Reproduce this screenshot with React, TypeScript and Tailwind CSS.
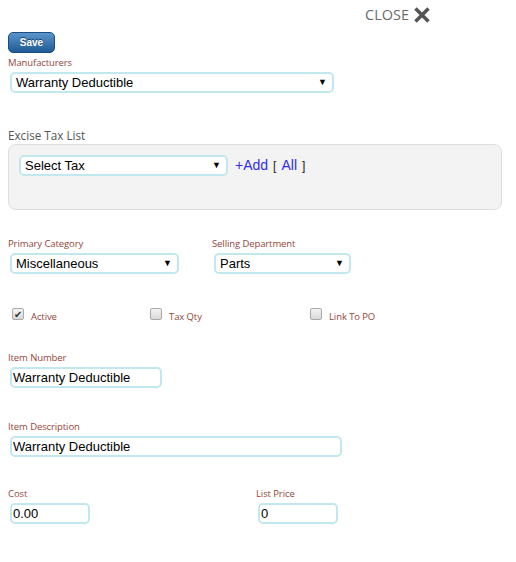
import React from "react";

const LABEL =
  "text-[9.5px] leading-[12px] tracking-[-0.1px] text-[#94463a] font-['Open_Sans',sans-serif]";
const FIELD =
  "h-[21px] border-2 border-[#c2e8ef] rounded-[5px] bg-white flex items-center text-[13px] text-black font-['Liberation_Sans',Arial,sans-serif]";

const Select = ({ value, width }: { value: string; width: string }) => (
  <div className={`${FIELD} ${width} justify-between pl-[4px] pr-[5px]`}>
    <span>{value}</span>
    <span className="text-[9px] leading-none">▼</span>
  </div>
);

const Input = ({ value, width }: { value: string; width: string }) => (
  <div className={`${FIELD} ${width} pl-[1px]`}>{value}</div>
);

const Check = ({ label, checked }: { label: string; checked?: boolean }) => (
  <div className="flex items-center gap-[7px]">
    <div className="w-[12px] h-[12px] rounded-[2px] border border-[#a9a9a9] bg-gradient-to-b from-[#f4f4f4] to-[#d8d8d8] flex items-center justify-center text-[10px] leading-none text-[#333]">
      {checked ? "✔" : ""}
    </div>
    <span className={`${LABEL} mt-[6px]`}>{label}</span>
  </div>
);

export default function App() {
  return (
    <div className="w-[516px] h-[562px] bg-white px-2 pt-[6px] font-['Open_Sans',sans-serif]">
      <div className="flex justify-end items-center pr-[78px] gap-[5px]">
        <span className="text-[14.5px] text-[#6b6b6b] leading-[18px]">CLOSE</span>
        <svg width="16" height="16" viewBox="0 0 16 16">
          <path d="M1.5 1.5 L14.5 14.5 M14.5 1.5 L1.5 14.5" stroke="#555" strokeWidth="3.6" />
        </svg>
      </div>

      <button className="mt-[8px] w-[47px] h-[21px] rounded-[5px] border border-[#1b4c7f] bg-gradient-to-b from-[#5b95cc] to-[#1f5b95] text-white text-[10px] font-bold font-['Liberation_Sans',Arial,sans-serif] [text-shadow:0_-1px_0_#1a3f66] flex items-center justify-center">
        Save
      </button>

      <div className={`${LABEL} mt-[4px]`}>Manufacturers</div>
      <div className="ml-[2px] mt-[3px]">
        <Select value="Warranty Deductible" width="w-[324px]" />
      </div>

      <div className="mt-[34px] text-[11.7px] leading-[16px] text-[#555]">Excise Tax List</div>
      <div className="mt-[1px] h-[66px] w-[494px] rounded-[8px] border border-[#dcdfe0] bg-[#f3f3f3] pl-[10px] pt-[10px]">
        <div className="flex items-center gap-[7px]">
          <Select value="Select Tax" width="w-[209px]" />
          <div className="text-[14px] font-['Liberation_Sans',Arial,sans-serif] flex items-center">
            <span className="text-[#2f2fe8]">+Add</span>
            <span className="ml-[5px] text-[12px] text-[#222]">[</span>
            <span className="ml-[5px] text-[#2f2fe8]">All</span>
            <span className="ml-[5px] text-[12px] text-[#222]">]</span>
          </div>
        </div>
      </div>

      <div className="mt-[28px] flex">
        <div className="w-[204px]">
          <div className={LABEL}>Primary Category</div>
          <div className="ml-[2px] mt-[3px]">
            <Select value="Miscellaneous" width="w-[169px]" />
          </div>
        </div>
        <div>
          <div className={LABEL}>Selling Department</div>
          <div className="ml-[2px] mt-[3px]">
            <Select value="Parts" width="w-[137px]" />
          </div>
        </div>
      </div>

      <div className="mt-[31px] flex pl-[4px]">
        <div className="w-[138px]">
          <Check label="Active" checked />
        </div>
        <div className="w-[160px]">
          <Check label="Tax Qty" />
        </div>
        <Check label="Link To PO" />
      </div>

      <div className={`${LABEL} mt-[29px]`}>Item Number</div>
      <div className="ml-[2px] mt-[3px]">
        <Input value="Warranty Deductible" width="w-[152px]" />
      </div>

      <div className={`${LABEL} mt-[33px]`}>Item Description</div>
      <div className="ml-[2px] mt-[3px]">
        <Input value="Warranty Deductible" width="w-[332px]" />
      </div>

      <div className="mt-[31px] flex">
        <div className="w-[248px]">
          <div className={LABEL}>Cost</div>
          <div className="ml-[2px] mt-[3px]">
            <Input value="0.00" width="w-[80px]" />
          </div>
        </div>
        <div>
          <div className={LABEL}>List Price</div>
          <div className="ml-[2px] mt-[3px]">
            <Input value="0" width="w-[80px]" />
          </div>
        </div>
      </div>
    </div>
  );
}
